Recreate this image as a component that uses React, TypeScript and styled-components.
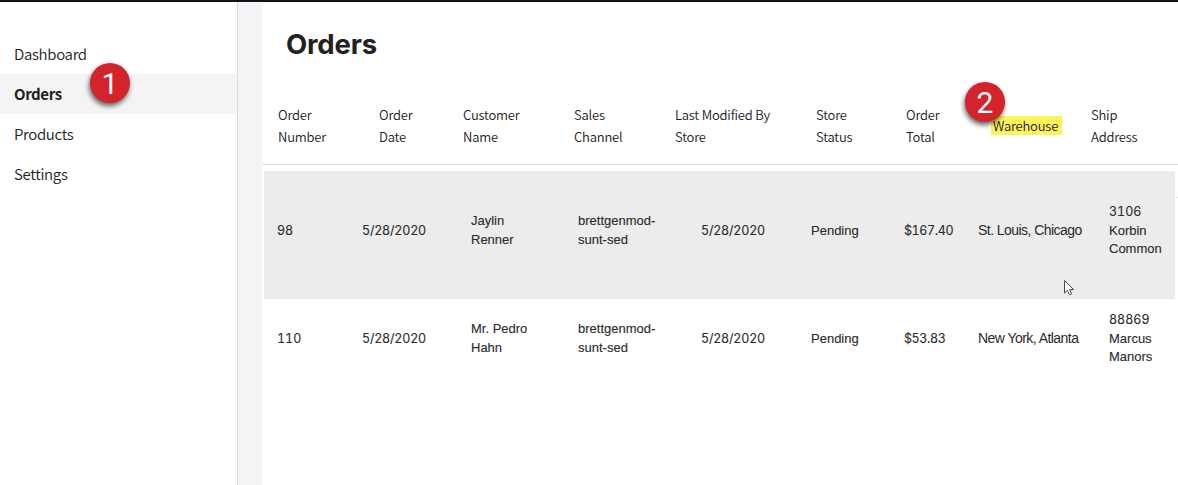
import React from 'react'
import styled, { createGlobalStyle } from 'styled-components'

const GlobalStyle = createGlobalStyle`
  * {
    box-sizing: border-box;
  }
  body {
    margin: 0;
    background: #fff;
    color: #212123;
    overflow: hidden;
  }
`

const Page = styled.div`
  display: flex;
  height: 485px;
  border-top: 2px solid #130f18;
  background: #f3f4f6;
  font-family: 'Noto Sans CJK SC', 'Noto Sans', sans-serif;
`

const Sidebar = styled.nav`
  width: 238px;
  flex-shrink: 0;
  padding-top: 32px;
  background: #fff;
  border-right: 1px solid #dcdddf;
`

const NavItem = styled.a<{ $active?: boolean }>`
  position: relative;
  display: flex;
  align-items: center;
  height: 40px;
  padding: 0 14px 2px;
  font-size: 15px;
  font-weight: ${(p) => (p.$active ? 700 : 350)};
  letter-spacing: ${(p) => (p.$active ? '-0.4px' : '-0.33px')};
  background: ${(p) => (p.$active ? '#f4f4f4' : 'transparent')};
`

const Marker = styled.span<{ $left: number; $top: number }>`
  position: absolute;
  z-index: 1;
  left: ${(p) => p.$left}px;
  top: ${(p) => p.$top}px;
  width: 40px;
  height: 40px;
  border-radius: 50%;
  background: #d3232b;
  color: #fff;
  font: 400 30px/41px Roboto, Arial, sans-serif;
  letter-spacing: 0;
  text-align: center;
  box-shadow: -1px 3px 5px rgba(0, 0, 0, 0.6);
`

const Main = styled.main`
  flex: 1;
  min-width: 0;
  margin-left: 24px;
  background: #fff;
  border-top-left-radius: 4px;
`

const Title = styled.h1`
  margin: 0;
  padding: 22px 0 0 24px;
  height: 92px;
  font: 700 27.5px/40px Inter, sans-serif;
  letter-spacing: -0.2px;
`

const TableHead = styled.div`
  display: grid;
  grid-template-columns: 101px 84px 111px 101px 141px 90px 87px 98px 1fr;
  align-items: center;
  height: 71px;
  padding: 0 0 6px 16px;
  border-bottom: 1px solid #dedede;
  font-size: 13px;
  font-weight: 350;
  letter-spacing: -0.2px;
  line-height: 22px;
`

const HeadCell = styled.div`
  position: relative;
  white-space: pre-line;
`

const Highlight = styled.mark`
  display: block;
  width: 71px;
  height: 19px;
  margin: -1px 0 0 -2px;
  padding-left: 2px;
  background: #fff35b;
  color: inherit;
  line-height: 19px;
`

const TableBody = styled.div`
  display: flex;
  align-items: flex-start;
  margin-top: 6px;
`

const Rows = styled.div`
  width: 911px;
  margin-left: 2px;
`

const Row = styled.div<{ $shaded?: boolean }>`
  position: relative;
  display: grid;
  grid-template-columns: 85px 109px 107px 123px 110px 93px 74px 131px 1fr;
  align-items: center;
  height: ${(p) => (p.$shaded ? '128px' : '80px')};
  padding: 0 0 ${(p) => (p.$shaded ? '8px' : '0')} 13px;
  background: ${(p) => (p.$shaded ? '#ececec' : '#fff')};
`

const Cell = styled.div`
  color: #2b2b2b;
  font-family: 'Liberation Sans', Arial, sans-serif;
  font-size: 13px;
  line-height: 18.7px;
  white-space: pre-line;
  -webkit-text-stroke: 0.12px #2b2b2b;
`

const FigureCell = styled(Cell)<{ $spacing?: number }>`
  font-family: Inter, sans-serif;
  font-size: 12.5px;
  font-variant-numeric: tabular-nums;
  letter-spacing: ${(p) => p.$spacing || 0}px;
`

const WarehouseCell = styled(Cell)`
  padding-bottom: 2px;
  font-size: 14px;
  letter-spacing: -0.55px;
  -webkit-text-stroke: 0;
`

const BodyRule = styled.div`
  flex: 1;
  margin-top: 26px;
  border-top: 1px solid #e4e4e4;
`

const Cursor = styled.svg`
  position: absolute;
  left: 799px;
  top: 108px;
`

const navItems = ['Dashboard', 'Orders', 'Products', 'Settings']

const columns = [
  'Order\nNumber',
  'Order\nDate',
  'Customer\nName',
  'Sales\nChannel',
  'Last Modified By\nStore',
  'Store\nStatus',
  'Order\nTotal',
  'Warehouse',
  'Ship\nAddress',
]

const orders = [
  {
    number: '98',
    date: '5/28/2020',
    customer: 'Jaylin\nRenner',
    channel: 'brettgenmod-\nsunt-sed',
    modified: '5/28/2020',
    status: 'Pending',
    total: '$167.40',
    warehouse: 'St. Louis, Chicago',
    houseNumber: '3106',
    street: 'Korbin\nCommon',
  },
  {
    number: '110',
    date: '5/28/2020',
    customer: 'Mr. Pedro\nHahn',
    channel: 'brettgenmod-\nsunt-sed',
    modified: '5/28/2020',
    status: 'Pending',
    total: '$53.83',
    warehouse: 'New York, Atlanta',
    houseNumber: '88869',
    street: 'Marcus\nManors',
  },
]

export default function App() {
  return (
    <>
      <GlobalStyle />
      <Page>
        <Sidebar>
          {navItems.map((item) => (
            <NavItem key={item} $active={item === 'Orders'}>
              {item}
              {item === 'Orders' && (
                <Marker $left={90} $top={-11}>
                  1
                </Marker>
              )}
            </NavItem>
          ))}
        </Sidebar>
        <Main>
          <Title>Orders</Title>
          <TableHead>
            {columns.map((label) => (
              <HeadCell key={label}>
                {label === 'Warehouse' ? (
                  <>
                    <Marker $left={-28} $top={-35}>
                      2
                    </Marker>
                    <Highlight>{label}</Highlight>
                  </>
                ) : (
                  label
                )}
              </HeadCell>
            ))}
          </TableHead>
          <TableBody>
            <Rows>
              {orders.map((order, i) => (
                <Row key={order.number} $shaded={i === 0}>
                  <FigureCell>{order.number}</FigureCell>
                  <FigureCell $spacing={-0.2}>{order.date}</FigureCell>
                  <Cell>{order.customer}</Cell>
                  <Cell>{order.channel}</Cell>
                  <FigureCell $spacing={-0.2}>{order.modified}</FigureCell>
                  <Cell>{order.status}</Cell>
                  <FigureCell $spacing={-0.4}>{order.total}</FigureCell>
                  <WarehouseCell>{order.warehouse}</WarehouseCell>
                  <div>
                    <FigureCell>{order.houseNumber}</FigureCell>
                    <Cell>{order.street}</Cell>
                  </div>
                  {i === 0 && (
                    <Cursor width="12" height="18" viewBox="0 0 12 18">
                      <path
                        d="M1.5 1.5v12.6l2.9-2.7 2 4.4 2.2-1-2-4.2h4z"
                        fill="#fff"
                        stroke="#48484c"
                      />
                    </Cursor>
                  )}
                </Row>
              ))}
            </Rows>
            <BodyRule />
          </TableBody>
        </Main>
      </Page>
    </>
  )
}
